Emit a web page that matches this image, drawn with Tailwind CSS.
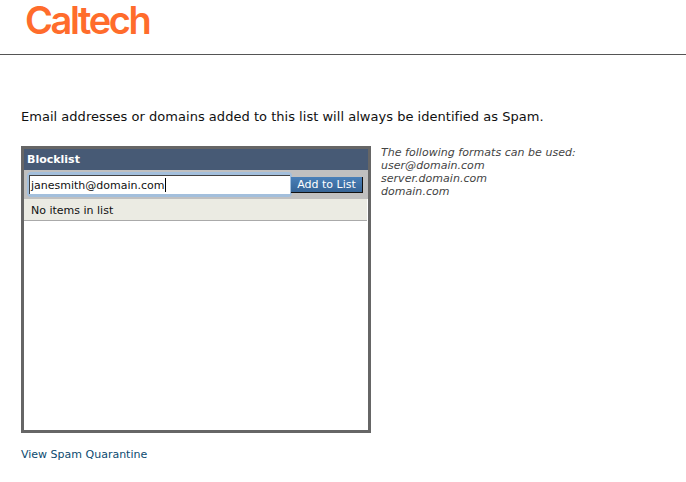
<!DOCTYPE html>
<html lang="en">
<head>
    <meta charset="UTF-8">
    <title>Blocklist</title>
    <script src="https://cdn.jsdelivr.net/npm/@tailwindcss/browser@4"></script>
</head>
<body class="bg-white font-['DejaVu_Sans',sans-serif]">

<!-- Header -->
<div class="h-[55px] border-b border-[#555] pl-[25px]">
    <div class="font-['Inter',sans-serif] font-semibold text-[38px] leading-[40px] tracking-[-2.4px] text-[#ff6c2c]">Caltech</div>
</div>

<!-- Main Content -->
<div class="pl-[21px]">
    <p class="mt-[53px] text-[13px] leading-[18px] tracking-[0.025px] text-[#111]">Email addresses or domains added to this list will always be identified as Spam.</p>

    <div class="mt-[20px] flex items-start">
        <!-- Blocklist box -->
        <div class="w-[350px] h-[287px] border-[3px] border-[#666] bg-white">
            <div class="h-[21px] pl-[3px] bg-[#475a75] text-white text-[11px] font-bold leading-[22px]">Blocklist</div>
            <div class="h-[29px] bg-[#c0c0c0] flex items-start">
                <div class="ml-[3px] mt-[2px] w-[265px] h-[25px] rounded-[4px] bg-[#a3bfdc] pl-[2px] pr-[2px] pt-[3px]">
                    <div class="h-[19px] pl-px bg-white border-t border-l border-[#444] text-[11px] leading-[17px] text-[#111] flex items-center">
                        <span>janesmith@domain.com</span><span class="w-px h-[14px] bg-black"></span>
                    </div>
                </div>
                <button class="-ml-px mt-[7px] w-[72px] h-[16px] bg-linear-to-b from-[#4a80b8] to-[#366496] border-r border-b border-[#111] text-white text-[11px] leading-[16px] text-center">Add to List</button>
            </div>
            <div class="h-[22px] mr-[1px] pl-[7px] bg-[#ebebe3] border-b border-[#aaa] text-[11px] leading-[23px] text-[#111]">No items in list</div>
        </div>

        <!-- Formats hint -->
        <div class="ml-[10px] text-[11px] leading-[13px] tracking-[0.03px] italic text-[#444]">
            <div>The following formats can be used:</div>
            <div>user@domain.com</div>
            <div>server.domain.com</div>
            <div>domain.com</div>
        </div>
    </div>

    <a href="#" class="block mt-[15px] text-[11px] leading-[14px] text-[#0b4a6f]">View Spam Quarantine</a>
</div>

</body>
</html>
